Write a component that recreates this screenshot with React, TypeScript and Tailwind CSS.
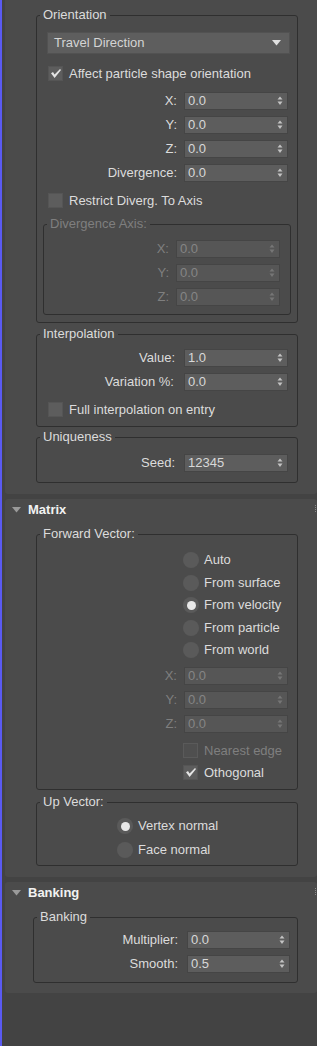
import React from "react";

const PANEL = "bg-[#4b4b4b]";

function Arrows({ dim }: { dim?: boolean }) {
  const c = dim ? "#767676" : "#c4c4c4";
  return (
    <svg width="6" height="10" viewBox="0 0 6 10" className="absolute right-[4px] top-[3px]">
      <path d="M0.5 3.6 L3 0.4 L5.5 3.6 Z" fill={c} />
      <path d="M0.5 5.6 L3 9 L5.5 5.6 Z" fill={c} />
    </svg>
  );
}

function Spin({
  label,
  value,
  dim,
  boxClass = "w-[104px]",
  gapClass = "mr-[7px]",
}: {
  label: string;
  value: string;
  dim?: boolean;
  boxClass?: string;
  gapClass?: string;
}) {
  return (
    <div className="flex items-center justify-end h-[18px]">
      <span className={`${gapClass} ${dim ? "text-[#7f7f7f]" : "text-[#dcdcdc]"}`}>{label}</span>
      <div
        className={`relative h-[18px] ${boxClass} border border-[#454545] pl-[3px] leading-[16px] ${
          dim ? "bg-[#565656] text-[#858585]" : "bg-[#5d5d5d] text-[#d8d8d8]"
        }`}
      >
        {value}
        <Arrows dim={dim} />
      </div>
    </div>
  );
}

function Check({ label, checked, dim }: { label: string; checked?: boolean; dim?: boolean }) {
  return (
    <div className="flex items-center h-[15px]">
      <div
        className={`w-[15px] h-[15px] border flex items-center justify-center ${
          dim ? "bg-[#4f4f4f] border-[#5a5a5a]" : "bg-[#5d5d5d] border-[#555555]"
        }`}
      >
        {checked && (
          <svg width="12" height="11" viewBox="0 0 12 11">
            <path d="M1 5.2 L3 4 L4.6 6.6 L10 1 L11 2 L4.6 10 Z" fill="#e4e4e4" />
          </svg>
        )}
      </div>
      <span className={`ml-[6px] ${dim ? "text-[#7f7f7f]" : "text-[#dcdcdc]"}`}>{label}</span>
    </div>
  );
}

function Radio({ label, on }: { label: string; on?: boolean }) {
  return (
    <div className="flex items-center h-[16px]">
      <div className="w-[16px] h-[16px] rounded-full bg-[#5a5a5a] flex items-center justify-center">
        {on && <div className="w-[9px] h-[9px] rounded-full bg-[#e8e8e8]" />}
      </div>
      <span className="ml-[5px] text-[#dcdcdc]">{label}</span>
    </div>
  );
}

function Group({
  title,
  dim,
  className,
  children,
}: {
  title: string;
  dim?: boolean;
  className: string;
  children: React.ReactNode;
}) {
  return (
    <div className={`relative rounded-[3px] border border-[#2f2f2f] ${className}`}>
      <span
        className={`absolute left-[3px] -top-[9px] px-[3px] leading-[16px] ${PANEL} ${
          dim ? "text-[#7f7f7f]" : "text-[#dcdcdc]"
        }`}
      >
        {title}
      </span>
      {children}
    </div>
  );
}

function Header({ title }: { title: string }) {
  return (
    <div className="relative flex items-center h-[22px]">
      <svg width="9" height="6" viewBox="0 0 9 6" className="ml-[7px]">
        <path d="M0 0 L9 0 L4.5 5.5 Z" fill="#9a9a9a" />
      </svg>
      <span className="ml-[7px] font-bold text-[#f2f2f2]">{title}</span>
      <div className="absolute right-[1px] top-[6px] flex flex-col gap-[1px]">
        <div className="w-[1px] h-[1px] bg-[#8a8a8a]" />
        <div className="w-[1px] h-[1px] bg-[#8a8a8a]" />
        <div className="w-[1px] h-[1px] bg-[#8a8a8a]" />
        <div className="w-[1px] h-[1px] bg-[#8a8a8a]" />
      </div>
    </div>
  );
}

export default function App() {
  return (
    <div className="flex w-[317px] h-[1046px] bg-[#434343] font-['Liberation_Sans',Arial,sans-serif] text-[13px] leading-[16px] overflow-hidden">
      <div className="w-[2px] h-full bg-[#5a5af2] shrink-0" />
      <div className="ml-[3px] w-[312px] flex flex-col">
        {/* Rollout 1 */}
        <div className={`${PANEL} rounded-b-[3px] pt-[15px] pb-[11px]`}>
          <Group title="Orientation" className="ml-[31px] w-[262px]">
            <div className="mt-[16px] ml-[10px] w-[243px] h-[22px] bg-[#5e5e5e] border border-[#525252] flex items-center justify-between pl-[6px] pr-[8px] text-[#d4d4d4]">
              <span>Travel Direction</span>
              <svg width="9" height="6" viewBox="0 0 9 6">
                <path d="M0 0 L9 0 L4.5 5.5 Z" fill="#e0e0e0" />
              </svg>
            </div>
            <div className="mt-[12px] ml-[11px]">
              <Check label="Affect particle shape orientation" checked />
            </div>
            <div className="mt-[11px] pr-[9px] flex flex-col gap-[6px]">
              <Spin label="X:" value="0.0" />
              <Spin label="Y:" value="0.0" />
              <Spin label="Z:" value="0.0" />
              <Spin label="Divergence:" value="0.0" />
            </div>
            <div className="mt-[11px] ml-[11px]">
              <Check label="Restrict Diverg. To Axis" />
            </div>
            <Group title="Divergence Axis:" dim className="mt-[16px] ml-[6px] w-[248px]">
              <div className="mt-[15px] pr-[10px] flex flex-col gap-[6px] pb-[8px]">
                <Spin label="X:" value="0.0" dim />
                <Spin label="Y:" value="0.0" dim />
                <Spin label="Z:" value="0.0" dim />
              </div>
            </Group>
            <div className="h-[7px]" />
          </Group>

          <Group title="Interpolation" className="mt-[11px] ml-[31px] w-[262px]">
            <div className="mt-[14px] pr-[9px] flex flex-col gap-[6px]">
              <Spin label="Value:" value="1.0" gapClass="mr-[9px]" />
              <Spin label="Variation %:" value="0.0" gapClass="mr-[10px]" />
            </div>
            <div className="mt-[11px] ml-[11px] mb-[9px]">
              <Check label="Full interpolation on entry" />
            </div>
          </Group>

          <Group title="Uniqueness" className="mt-[10px] ml-[31px] w-[262px]">
            <div className="mt-[16px] pr-[9px] pb-[10px]">
              <Spin label="Seed:" value="12345" gapClass="mr-[9px]" />
            </div>
          </Group>
        </div>

        {/* Rollout 2 Matrix */}
        <div className={`${PANEL} rounded-[3px] mt-[5px] pb-[11px]`}>
          <Header title="Matrix" />
          <Group title="Forward Vector:" className="mt-[13px] ml-[31px] w-[262px]">
            <div className="mt-[17px] ml-[146px] flex flex-col gap-[6.5px]">
              <Radio label="Auto" />
              <Radio label="From surface" />
              <Radio label="From velocity" on />
              <Radio label="From particle" />
              <Radio label="From world" />
            </div>
            <div className="mt-[9px] pr-[9px] flex flex-col gap-[6px]">
              <Spin label="X:" value="0.0" dim />
              <Spin label="Y:" value="0.0" dim />
              <Spin label="Z:" value="0.0" dim />
            </div>
            <div className="mt-[10px] ml-[146px] flex flex-col gap-[7px] pb-[9px]">
              <Check label="Nearest edge" dim />
              <Check label="Othogonal" checked />
            </div>
          </Group>
          <Group title="Up Vector:" className="mt-[12px] ml-[31px] w-[262px]">
            <div className="mt-[15px] ml-[80px] flex flex-col gap-[8px] pb-[7px]">
              <Radio label="Vertex normal" on />
              <Radio label="Face normal" />
            </div>
          </Group>
        </div>

        {/* Rollout 3 Banking */}
        <div className={`${PANEL} rounded-[3px] mt-[5px] pb-[10px]`}>
          <Header title="Banking" />
          <Group title="Banking" className="mt-[13px] ml-[28px] w-[265px]">
            <div className="mt-[13px] pr-[7px] flex flex-col gap-[6px] pb-[9px]">
              <Spin label="Multiplier:" value="0.0" boxClass="w-[103px]" gapClass="mr-[9px]" />
              <Spin label="Smooth:" value="0.5" boxClass="w-[103px]" gapClass="mr-[9px]" />
            </div>
          </Group>
        </div>
      </div>
    </div>
  );
}
